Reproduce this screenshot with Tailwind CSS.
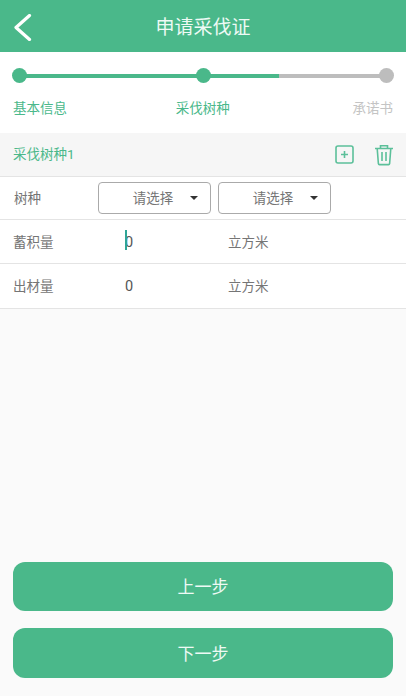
<!DOCTYPE html>
<html lang="zh">
<head>
<meta charset="utf-8">
<script src="https://cdn.jsdelivr.net/npm/@tailwindcss/browser@4"></script>
</head>
<body class="m-0">
<div class="w-[406px] h-[696px] overflow-hidden flex flex-col bg-[#fafafa] font-['Roboto','Noto_Sans_CJK_SC',sans-serif]">
  <header class="relative h-[52px] bg-[#4ab88a] flex items-center justify-center shrink-0">
    <svg class="absolute left-[13px] top-[14px]" width="19" height="27" viewBox="0 0 19 27" fill="none"><path d="M16.5 1.5 L3 13.5 L16.5 25.5" stroke="#fff" stroke-width="3.2" stroke-linecap="round" stroke-linejoin="round"/></svg>
    <h1 class="text-[19px] leading-[24px] font-normal text-[#eefaf5] mt-[3px]">申请采伐证</h1>
  </header>
  <section class="h-[81px] bg-white shrink-0 px-[12px] pt-[16px]">
    <div class="relative h-[15px]">
      <div class="absolute left-[8px] right-[8px] top-[6px] h-[4px] flex">
        <div class="w-[259px] bg-[#4ab88a]"></div>
        <div class="flex-1 bg-[#bdbdbd]"></div>
      </div>
      <div class="relative flex justify-between">
        <span class="w-[15px] h-[15px] rounded-full bg-[#4ab88a]"></span>
        <span class="w-[15px] h-[15px] rounded-full bg-[#4ab88a]"></span>
        <span class="w-[15px] h-[15px] rounded-full bg-[#bdbdbd]"></span>
      </div>
    </div>
    <div class="flex justify-between mt-[16px] pl-[1px] pr-[1px] text-[13.5px] leading-[18px]">
      <span class="text-[#4ab88a]">基本信息</span>
      <span class="text-[#4ab88a] -translate-x-[7px]">采伐树种</span>
      <span class="text-[#c4c4c4]">承诺书</span>
    </div>
  </section>
  <div class="h-[44px] shrink-0 bg-[#f6f6f6] border-b border-[#e4e4e4] flex items-center pl-[13px] pr-[12px]">
    <span class="text-[13.5px] text-[#4ab88a]">采伐树种1</span>
    <svg class="ml-auto" width="19" height="19" viewBox="0 0 19 19" fill="none" stroke="#5cc09a" stroke-width="1.6"><rect x="1" y="1" width="17" height="17" rx="2"/><path d="M9.5 6v7M6 9.5h7"/></svg>
    <svg class="ml-[20px]" width="20" height="22" viewBox="0 0 20 22" fill="none" stroke="#5cc09a" stroke-width="1.6"><path d="M1 4.5h18M6.5 4.5V1.8h7v2.7M3.2 4.5l1.2 15.2c.1.6.4.9 1 .9h9.2c.6 0 .9-.3 1-.9l1.2-15.2M8 8v9M12 8v9"/></svg>
  </div>
  <div class="h-[43px] shrink-0 bg-white border-b border-[#e4e4e4] flex items-center pl-[14px]">
    <span class="w-[84px] text-[13.5px] text-[#757575]">树种</span>
    <div class="relative w-[113px] h-[32px] border border-[#aaaaaa] rounded-[4px] flex items-center justify-center text-[13.5px] text-[#757575] mr-[7px]">
      <span class="pr-[3px]">请选择</span>
      <span class="absolute right-[12px] top-[13px] w-0 h-0 border-x-[4px] border-x-transparent border-t-[4px] border-t-[#333]"></span>
    </div>
    <div class="relative w-[113px] h-[32px] border border-[#aaaaaa] rounded-[4px] flex items-center justify-center text-[13.5px] text-[#757575]">
      <span class="pr-[3px]">请选择</span>
      <span class="absolute right-[12px] top-[13px] w-0 h-0 border-x-[4px] border-x-transparent border-t-[4px] border-t-[#333]"></span>
    </div>
  </div>
  <div class="h-[44px] shrink-0 bg-white border-b border-[#e4e4e4] flex items-center pl-[13px] pt-[1px] text-[13.5px] text-[#757575]">
    <span class="w-[112px]">蓄积量</span>
    <span class="relative w-[103px] pt-[1px] text-[14.5px] text-[#555]">0<span class="absolute left-0 top-[-1px] w-[2px] h-[20px] bg-[#2fa596]"></span></span>
    <span>立方米</span>
  </div>
  <div class="h-[45px] shrink-0 bg-white border-b border-[#e4e4e4] flex items-center pl-[13px] text-[13.5px] text-[#757575]">
    <span class="w-[112px]">出材量</span>
    <span class="w-[103px] pt-[2px] text-[14.5px] text-[#555]">0</span>
    <span>立方米</span>
  </div>
  <div class="flex-1 flex flex-col justify-end gap-[17px] px-[13px] pb-[18px]">
    <button class="h-[49px] pt-[2px] rounded-[12px] bg-[#4ab88a] text-[#eefaf5] text-[17px]">上一步</button>
    <button class="h-[50px] pt-[3px] rounded-[12px] bg-[#4ab88a] text-[#eefaf5] text-[17px]">下一步</button>
  </div>
</div>
</body>
</html>
